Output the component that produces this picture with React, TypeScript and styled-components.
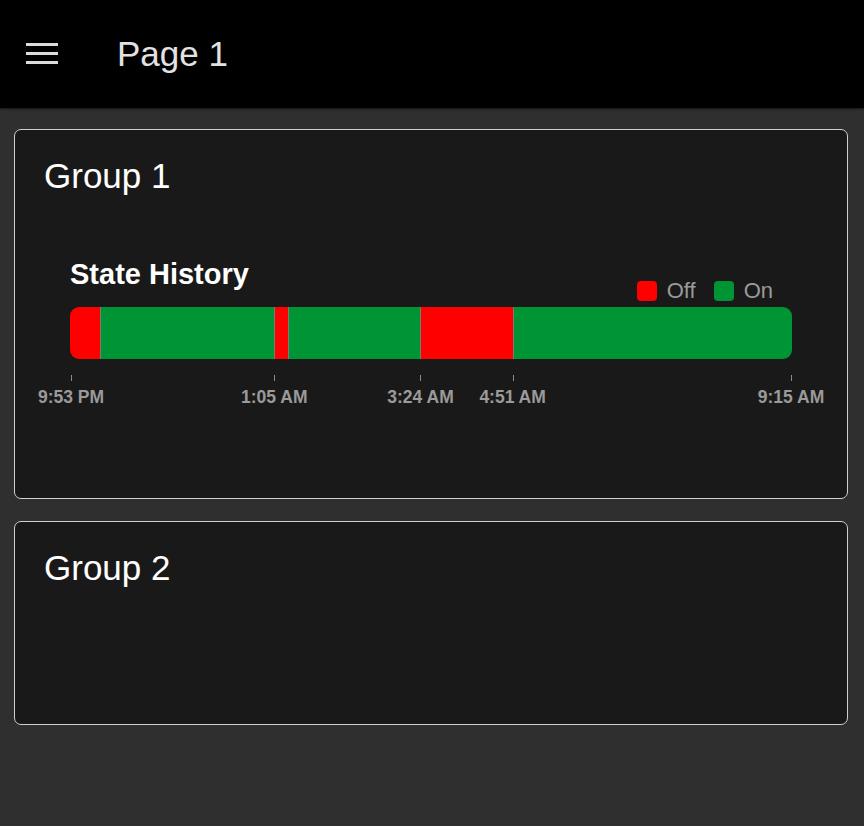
import React from "react";
import styled, { createGlobalStyle } from "styled-components";

const GlobalStyle = createGlobalStyle`
  html, body {
    margin: 0;
    padding: 0;
    background: #2f2f2f;
    font-family: "Liberation Sans", Arial, sans-serif;
  }
  * { box-sizing: border-box; }
`;

interface ISegment {
    state: "on" | "off"
    width: number
}

interface ITick {
    label: string
    pos: number
}

const TOTAL = 721;

const segments: ISegment[] = [
    { state: "off", width: 30 },
    { state: "on", width: 174 },
    { state: "off", width: 14 },
    { state: "on", width: 132 },
    { state: "off", width: 92 },
    { state: "on", width: 279 },
];

const ticks: ITick[] = [
    { label: "9:53 PM", pos: 1 },
    { label: "1:05 AM", pos: 204 },
    { label: "3:24 AM", pos: 350 },
    { label: "4:51 AM", pos: 442 },
    { label: "9:15 AM", pos: 720 },
];

const colors = {
    on: "#009534",
    off: "#ff0000",
};

const Page = styled.div`
    min-height: 826px;
    background: #2f2f2f;
`;

const TopBar = styled.header`
    height: 108px;
    background: #000;
    display: flex;
    align-items: center;
    padding-left: 26px;
    gap: 59px;
    box-shadow: 0 1px 2px rgba(0, 0, 0, 0.6);
`;

const MenuButton = styled.div`
    width: 32px;
    display: flex;
    flex-direction: column;
    gap: 6px;
    margin-top: -2px;

    span {
        display: block;
        height: 3px;
        background: #dcdcdc;
    }
`;

const PageTitle = styled.h1`
    margin: 0;
    font-size: 35px;
    font-weight: 400;
    color: #e2e2e2;
`;

const Content = styled.main`
    padding: 21px 16px 0 14px;
    display: flex;
    flex-direction: column;
    gap: 22px;
`;

const Card = styled.section<{ $minHeight: number }>`
    min-height: ${p => p.$minHeight}px;
    background: #1a1919;
    border: 1px solid #cfcfcf;
    border-radius: 7px;
    padding: 26px 29px 24px;
`;

const CardTitle = styled.h2`
    margin: 0;
    font-size: 35px;
    font-weight: 400;
    line-height: 39px;
    color: #fff;
`;

const Chart = styled.div`
    margin-top: 63px;
    padding: 0 26px;
`;

const ChartHeader = styled.div`
    display: flex;
    justify-content: space-between;
    align-items: flex-start;
    height: 43px;
`;

const ChartTitle = styled.h3`
    margin: 0;
    font-size: 29px;
    font-weight: 700;
    line-height: 32px;
    color: #fff;
`;

const Legend = styled.div`
    display: flex;
    align-items: center;
    gap: 18px;
    padding-top: 20px;
    margin-right: 19px;
    font-size: 22px;
    line-height: 25px;
    color: #9a9a9a;
`;

const LegendItem = styled.div`
    display: flex;
    align-items: center;
    gap: 10px;
`;

const Swatch = styled.span<{ $state: "on" | "off" }>`
    width: 20px;
    height: 20px;
    border-radius: 4px;
    background: ${p => colors[p.$state]};
`;

const Bar = styled.div`
    margin-top: 6px;
    height: 52px;
    display: flex;
    border-radius: 9px;
    overflow: hidden;
`;

const Segment = styled.div<{ $state: "on" | "off" }>`
    height: 100%;
    background: ${p => colors[p.$state]};
    & + & {
        border-left: 1px solid #7a7a7a;
    }
`;

const Axis = styled.div`
    position: relative;
    height: 48px;
`;

const Tick = styled.div`
    position: absolute;
    top: 16px;
    width: 1px;
    height: 6px;
    background: #8a8a8a;
`;

const TickLabel = styled.div`
    position: absolute;
    top: 28px;
    transform: translateX(-50%);
    white-space: nowrap;
    font-size: 17.5px;
    font-weight: 700;
    line-height: 20px;
    color: #9a9a9a;
`;

const StateHistory: React.FC = () => {
    return (
        <Chart>
            <ChartHeader>
                <ChartTitle>State History</ChartTitle>
                <Legend>
                    <LegendItem><Swatch $state="off" />Off</LegendItem>
                    <LegendItem><Swatch $state="on" />On</LegendItem>
                </Legend>
            </ChartHeader>
            <Bar>
                {segments.map((s, i) => (
                    <Segment
                        key={i}
                        $state={s.state}
                        style={{ width: `${(s.width / TOTAL) * 100}%` }}
                    />
                ))}
            </Bar>
            <Axis>
                {ticks.map((t, i) => (
                    <React.Fragment key={i}>
                        <Tick style={{ left: `${(t.pos / TOTAL) * 100}%` }} />
                        <TickLabel style={{ left: `${(t.pos / TOTAL) * 100}%` }}>{t.label}</TickLabel>
                    </React.Fragment>
                ))}
            </Axis>
        </Chart>
    )
}

export default function App() {
    return (
        <Page>
            <GlobalStyle />
            <TopBar>
                <MenuButton>
                    <span />
                    <span />
                    <span />
                </MenuButton>
                <PageTitle>Page 1</PageTitle>
            </TopBar>
            <Content>
                <Card $minHeight={370}>
                    <CardTitle>Group 1</CardTitle>
                    <StateHistory />
                </Card>
                <Card $minHeight={204}>
                    <CardTitle>Group 2</CardTitle>
                </Card>
            </Content>
        </Page>
    )
}
